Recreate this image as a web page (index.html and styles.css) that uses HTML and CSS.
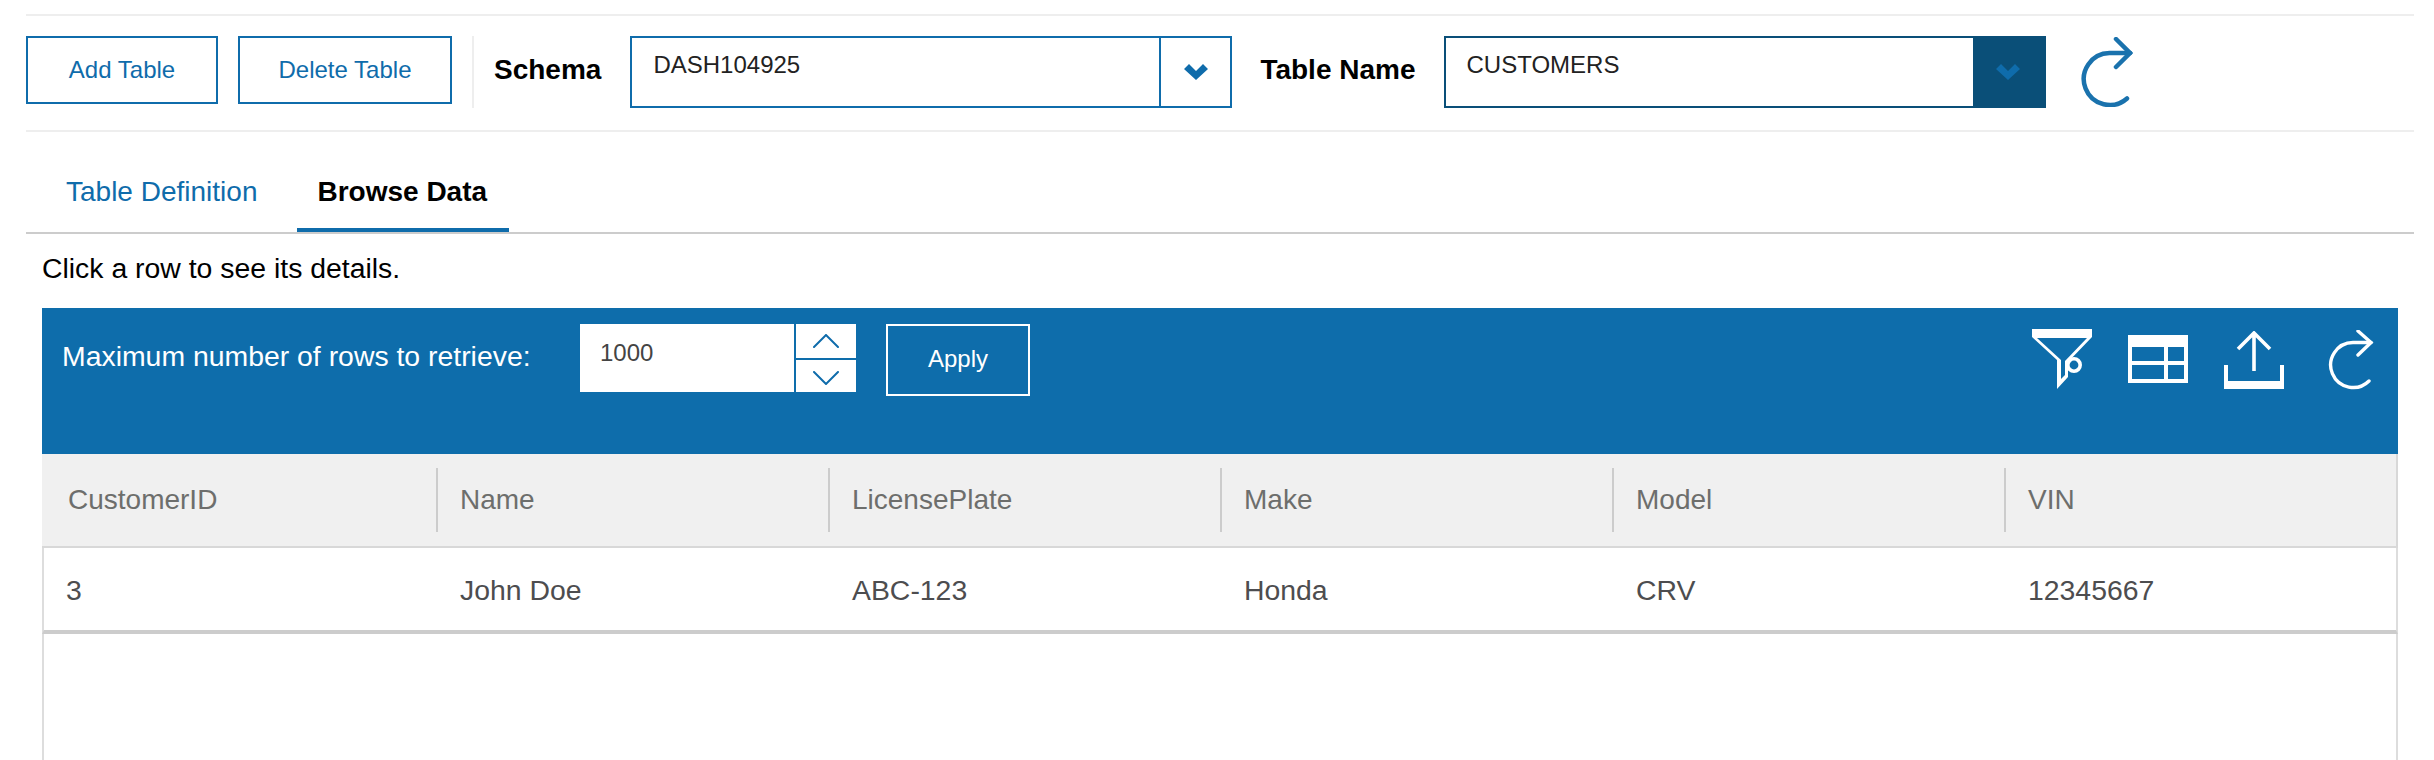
FILE: index.html
```html
<!DOCTYPE html>
<html lang="en">
<head>
<meta charset="UTF-8">
<title>Browse Data</title>
<link rel="stylesheet" href="styles.css">
</head>
<body>

<!-- Toolbar -->
<div class="toolbar">
  <button class="btn">Add Table</button>
  <button class="btn btn-delete">Delete Table</button>
  <div class="toolbar-sep"></div>
  <span class="field-label label-schema">Schema</span>
  <div class="select select-schema">
    <span class="select-value">DASH104925</span>
    <span class="select-arrow">
      <svg width="24" height="16" viewBox="0 0 24 16"><path d="M0 5 L5 0 L12 7 L19 0 L24 5 L12 16 Z" fill="#0f6cab"/></svg>
    </span>
  </div>
  <span class="field-label label-table">Table Name</span>
  <div class="select select-table">
    <span class="select-value">CUSTOMERS</span>
    <span class="select-arrow">
      <svg width="24" height="16" viewBox="0 0 24 16"><path d="M0 5 L5 0 L12 7 L19 0 L24 5 L12 16 Z" fill="#0f6cab"/></svg>
    </span>
  </div>
  <svg class="big-refresh" width="52" height="70" viewBox="0 0 52 70">
    <path d="M49 16 H28.5 A26 26 0 1 0 46 61.5" fill="none" stroke="#1a72ad" stroke-width="4.5" stroke-linecap="round"/>
    <path d="M35 2 L49 16 L35 30" fill="none" stroke="#1a72ad" stroke-width="4.5" stroke-linecap="round"/>
  </svg>
</div>

<!-- Tabs -->
<div class="tabs">
  <a class="tab">Table Definition</a>
  <a class="tab tab-active">Browse Data</a>
</div>

<p class="hint">Click a row to see its details.</p>

<div class="panel">
  <div class="panel-bar">
    <label class="bar-label">Maximum number of rows to retrieve:</label>
    <div class="spinner-input">1000</div>
    <div class="spinner">
      <span class="spin-btn">
        <svg width="26" height="14" viewBox="0 0 26 14"><path d="M1 13 L13 1 L25 13" fill="none" stroke="#0f6cab" stroke-width="2" stroke-linecap="round"/></svg>
      </span>
      <span class="spin-btn spin-down">
        <svg width="26" height="14" viewBox="0 0 26 14"><path d="M1 1 L13 13 L25 1" fill="none" stroke="#0f6cab" stroke-width="2" stroke-linecap="round"/></svg>
      </span>
    </div>
    <button class="apply-btn">Apply</button>
    <div class="bar-icons">
      <svg width="60" height="60" viewBox="0 0 60 60">
        <path d="M0 0 H60 V8 L36 33 V48 L25 60 V31 L0 8 Z M5 9 H55 L33 32 V46 L29 50 V31 Z" fill="#fff" fill-rule="evenodd"/>
        <circle cx="42" cy="36" r="6.2" fill="#0e6dab" stroke="#fff" stroke-width="3.6"/>
      </svg>
      <svg class="icon-table" width="60" height="48" viewBox="0 0 60 48">
        <path d="M0 0 H60 V48 H0 Z M4 12 V26 H36 V12 Z M40 12 V26 H56 V12 Z M4 30 V44 H36 V30 Z M40 30 V44 H56 V30 Z" fill="#fff" fill-rule="evenodd"/>
      </svg>
      <svg class="icon-upload" width="60" height="58" viewBox="0 0 60 58">
        <path d="M30 40 V3 M14 18 L30 2 L46 18" fill="none" stroke="#fff" stroke-width="3.6"/>
        <path d="M0 34 H4 V50 H56 V34 H60 V58 H0 Z" fill="#fff"/>
      </svg>
      <svg class="icon-refresh" width="46" height="60" viewBox="0 0 46 60">
        <path d="M43 12.5 H25 A22.5 22.5 0 1 0 41 51" fill="none" stroke="#fff" stroke-width="3.4" stroke-linecap="round"/>
        <path d="M30 1 L43 12.5 L30 25" fill="none" stroke="#fff" stroke-width="3.4" stroke-linecap="round"/>
      </svg>
    </div>
  </div>

  <div class="grid-head">
    <div class="head-cell">CustomerID</div>
    <div class="head-cell">Name</div>
    <div class="head-cell">LicensePlate</div>
    <div class="head-cell">Make</div>
    <div class="head-cell">Model</div>
    <div class="head-cell">VIN</div>
  </div>
  <div class="grid-row">
    <div class="row-cell">3</div>
    <div class="row-cell">John Doe</div>
    <div class="row-cell">ABC-123</div>
    <div class="row-cell">Honda</div>
    <div class="row-cell">CRV</div>
    <div class="row-cell">12345667</div>
  </div>
  <div class="grid-empty"></div>
</div>

</body>
</html>
```

FILE: styles.css
```css
html, body {
  height: 100%;
  overflow: hidden;
}

body {
  margin: 0;
  padding: 14px 20px 0 26px;
  background: #fff;
  color: #000;
  font-family: "Liberation Sans", Arial, sans-serif;
  box-sizing: border-box;
}

.toolbar {
  display: flex;
  align-items: flex-start;
  height: 118px;
  padding-top: 20px;
  box-sizing: border-box;
  border-top: 2px solid #eee;
  border-bottom: 2px solid #eee;
}

.btn {
  width: 192px;
  height: 68px;
  background: #fff;
  color: #0f6cab;
  border: 2px solid #0f6cab;
  font-family: inherit;
  font-size: 24px;
  padding: 0;
}

.btn-delete {
  width: 214px;
  margin-left: 20px;
}

.toolbar-sep {
  width: 2px;
  height: 72px;
  margin: 0 20px;
  background: #eee;
}

.field-label {
  font-size: 28px;
  font-weight: bold;
  line-height: 68px;
}

.label-schema {
  margin-right: 29px;
}

.label-table {
  margin: 0 28px;
}

.select {
  display: flex;
  flex: none;
  height: 72px;
  box-sizing: border-box;
  border: 2px solid #0f6cab;
  font-size: 24px;
  color: #222;
}

.select-schema {
  width: 602px;
}

.select-table {
  width: 602px;
  border-color: #0a4f78;
}

.select-value {
  flex: 1;
  padding: 13px 0 0 21px;
}

.select-arrow {
  width: 69px;
  display: flex;
  align-items: center;
  justify-content: center;
  border-left: 2px solid #0f6cab;
}

.select-table .select-arrow {
  width: 71px;
  background: #0a4f78;
  border-left: none;
}

.big-refresh {
  flex: none;
  margin: 1px 0 0 35px;
}

.tabs {
  display: flex;
  gap: 20px;
  height: 102px;
  padding-left: 20px;
  box-sizing: border-box;
  border-bottom: 2px solid #ccc;
}

.tab {
  display: flex;
  align-items: center;
  height: 100px;
  box-sizing: border-box;
  padding: 24px 20px 0;
  border-bottom: 4px solid transparent;
  font-size: 28px;
  color: #0f6cab;
}

.tab-active {
  padding-right: 22px;
  color: #000;
  font-weight: bold;
  border-bottom-color: #0f6cab;
}

.hint {
  margin: 19px 0 25px 16px;
  font-size: 28.4px;
  line-height: 30px;
}

.panel {
  margin-left: 16px;
  width: 2356px;
}

.panel-bar {
  display: flex;
  align-items: flex-start;
  height: 146px;
  padding: 16px 0 0 20px;
  box-sizing: border-box;
  background: #0e6dab;
}

.bar-label {
  width: 518px;
  color: #fff;
  font-size: 28.4px;
  font-weight: normal;
  line-height: 64px;
  white-space: nowrap;
}

.spinner-input {
  width: 214px;
  height: 68px;
  padding: 15px 0 0 20px;
  box-sizing: border-box;
  background: #fff;
  color: #444;
  font-size: 24px;
}

.spinner {
  display: flex;
  flex-direction: column;
  gap: 2px;
  width: 60px;
  height: 68px;
  margin-left: 2px;
}

.spin-btn {
  height: 34px;
  display: flex;
  align-items: center;
  justify-content: center;
  background: #fff;
}

.spin-down {
  height: 32px;
  padding-top: 4px;
  box-sizing: border-box;
}

.apply-btn {
  width: 144px;
  height: 72px;
  margin-left: 30px;
  background: transparent;
  color: #fff;
  border: 2px solid #fff;
  font-family: inherit;
  font-size: 24px;
  padding: 0 0 2px;
}

.bar-icons {
  display: flex;
  align-items: flex-start;
  gap: 36px;
  margin-left: auto;
  padding: 5px 24px 0 0;
}

.icon-table {
  margin-top: 6px;
}

.icon-upload {
  margin-top: 2px;
}

.icon-refresh {
  margin: 1px 0 0 8px;
}

.grid-head {
  display: grid;
  grid-template-columns: repeat(6, 392px);
  height: 94px;
  padding: 14px 0 0 4px;
  box-sizing: border-box;
  background: #f0f0f0;
  border-bottom: 2px solid #d8d8d8;
  border-right: 2px solid #d8d8d8;
}

.head-cell {
  height: 64px;
  line-height: 64px;
  padding-left: 22px;
  border-right: 2px solid #ccc;
  color: #6d6e6c;
  font-size: 28px;
}

.head-cell:last-child {
  border-right: none;
}

.grid-row {
  display: grid;
  grid-template-columns: repeat(6, 392px);
  height: 86px;
  border-left: 2px solid #ddd;
  border-right: 2px solid #ddd;
  border-bottom: 4px solid #ccc;
  box-sizing: border-box;
}

.row-cell {
  padding-left: 24px;
  line-height: 84px;
  color: #4d4d4f;
  font-size: 28.4px;
}

.row-cell:first-child {
  padding-left: 22px;
}

.grid-empty {
  height: 126px;
  border-left: 2px solid #ddd;
  border-right: 2px solid #ddd;
  box-sizing: border-box;
}
```
